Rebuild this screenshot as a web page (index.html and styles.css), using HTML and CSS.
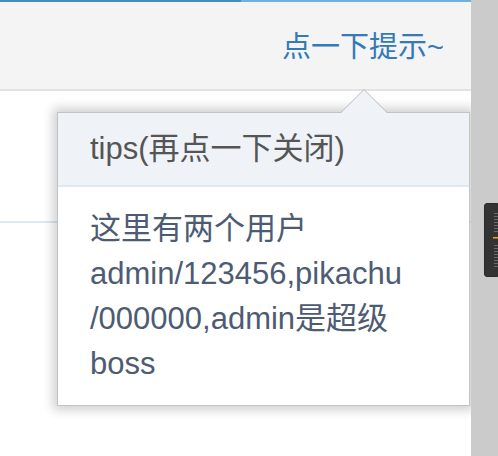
FILE: index.html
```html
<!DOCTYPE html>
<html lang="zh">
<head>
<meta charset="utf-8">
<title>tips</title>
<link rel="stylesheet" href="styles.css">
</head>
<body>
<div class="app">
  <div class="page">
    <div class="topline"><span class="topline-dark"></span><span class="topline-light"></span></div>
    <header class="bar">
      <a class="tip-link" href="#">点一下提示~</a>
    </header>
    <main class="content">
      <div class="rule"></div>
    </main>
    <div class="popover">
      <div class="popover-arrow"></div>
      <h3 class="popover-title">tips(再点一下关闭)</h3>
      <div class="popover-content">这里有两个用户<br>admin/123456,pikachu<br>/000000,admin是超级<br>boss</div>
    </div>
  </div>
  <aside class="scrollbar">
    <div class="minimap">
      <svg width="14" height="74" viewBox="0 0 14 74">
        <g fill="#6a6a6a">
          <rect x="9" y="9" width="5" height="1"/>
          <rect x="9" y="12" width="5" height="1"/>
          <rect x="9" y="15" width="5" height="1"/>
          <rect x="9" y="18" width="5" height="1"/>
          <rect x="9" y="21" width="5" height="1"/>
          <rect x="9" y="24" width="5" height="1"/>
          <rect x="9" y="27" width="5" height="1"/>
          <rect x="9" y="41" width="5" height="1"/>
          <rect x="9" y="44" width="5" height="1"/>
          <rect x="9" y="47" width="5" height="1"/>
          <rect x="9" y="50" width="5" height="1"/>
          <rect x="9" y="53" width="5" height="1"/>
          <rect x="9" y="56" width="5" height="1"/>
          <rect x="9" y="59" width="5" height="1"/>
          <rect x="9" y="62" width="5" height="1"/>
        </g>
        <rect x="8" y="33" width="6" height="1.5" fill="#f0a020"/>
      </svg>
    </div>
  </aside>
</div>
</body>
</html>
```

FILE: styles.css
```css
html, body {
  margin: 0;
  padding: 0;
  height: 100%;
}

body {
  font-family: "Liberation Sans", Arial, "Noto Sans CJK SC", sans-serif;
  background: #ffffff;
  overflow: hidden;
}

.app {
  display: flex;
  height: 456px;
}

.page {
  position: relative;
  flex: 1;
  min-width: 0;
  overflow: hidden;
  display: flex;
  flex-direction: column;
  background: #ffffff;
}

.topline {
  display: flex;
  height: 2px;
}

.topline-dark {
  width: 241px;
  background: #438eb9;
}

.topline-light {
  flex: 1;
  background: #6fb0dc;
}

.bar {
  height: 87px;
  background: #f4f4f4;
  border-bottom: 2px solid #e2e2e2;
  display: flex;
  align-items: center;
  justify-content: flex-end;
  padding-right: 27px;
}

.tip-link {
  font-size: 29px;
  line-height: 36px;
  color: #337ab7;
  text-decoration: none;
  margin-top: 2px;
}

.content {
  flex: 1;
}

.rule {
  margin-top: 130px;
  height: 2px;
  background: #dde8f2;
}

.popover {
  position: absolute;
  left: 57px;
  top: 112px;
  width: 411px;
  background: #ffffff;
  border: 1px solid #c4c4c4;
  box-shadow: 0 0 10px 4px rgba(0, 0, 0, 0.19);
}

.popover-arrow {
  position: absolute;
  left: 282px;
  top: -24px;
  width: 0;
  height: 0;
  border-left: 24px solid transparent;
  border-right: 24px solid transparent;
  border-bottom: 24px solid #b8b8b8;
}

.popover-arrow::after {
  content: "";
  position: absolute;
  left: -23px;
  top: 1px;
  width: 0;
  height: 0;
  border-left: 23px solid transparent;
  border-right: 23px solid transparent;
  border-bottom: 23px solid #eff3f8;
}

.popover-title {
  margin: 0;
  padding: 17px 32px;
  font-size: 31px;
  font-weight: normal;
  line-height: 38px;
  color: #555555;
  background: #eff3f8;
  border-bottom: 2px solid #dfe8f1;
}

.popover-content {
  padding: 19px 32px 19px;
  font-size: 31px;
  line-height: 45px;
  color: #4d5b73;
}

.scrollbar {
  position: relative;
  width: 27px;
  flex: none;
  background: #cbcbcb;
}

.minimap {
  position: absolute;
  left: 13px;
  top: 203px;
  width: 16px;
  height: 74px;
  background: #333333;
  border-radius: 3px;
  border: 1px solid #2a2a2a;
  box-sizing: border-box;
}

.minimap svg {
  display: block;
}
```
